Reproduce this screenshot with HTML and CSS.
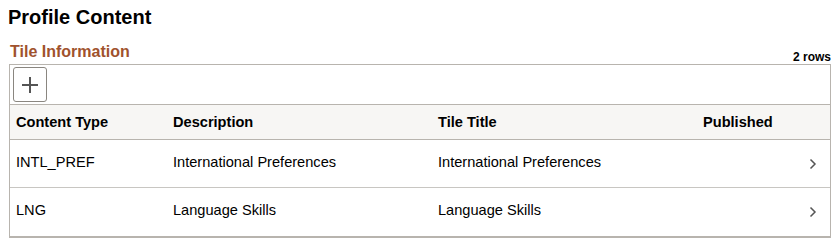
FILE: index.html
```html
<!DOCTYPE html>
<html>
<head>
<meta charset="utf-8">
<link rel="stylesheet" href="styles.css">
</head>
<body>
<h1 class="page-title">Profile Content</h1>
<div class="grid-head">
  <h2 class="grid-title">Tile Information</h2>
  <span class="row-count">2 rows</span>
</div>
<div class="grid">
  <div class="toolbar">
    <button class="add-btn" aria-label="Add">
      <svg width="20" height="20" viewBox="0 0 20 20"><path d="M10 2v16M2 10h16" stroke="#555" stroke-width="2" fill="none"/></svg>
    </button>
  </div>
  <table class="tbl">
    <colgroup>
      <col class="c1"><col class="c2"><col class="c3"><col class="c4"><col class="c5">
    </colgroup>
    <thead>
      <tr><th>Content Type</th><th>Description</th><th>Tile Title</th><th>Published</th><th></th></tr>
    </thead>
    <tbody>
      <tr><td>INTL_PREF</td><td>International Preferences</td><td>International Preferences</td><td></td><td class="chev"><svg width="8" height="12" viewBox="0 0 8 12"><path d="M1.5 1.5L6 6l-4.5 4.5" stroke="#555" stroke-width="1.5" fill="none"/></svg></td></tr>
      <tr><td>LNG</td><td>Language Skills</td><td>Language Skills</td><td></td><td class="chev"><svg width="8" height="12" viewBox="0 0 8 12"><path d="M1.5 1.5L6 6l-4.5 4.5" stroke="#555" stroke-width="1.5" fill="none"/></svg></td></tr>
    </tbody>
  </table>
</div>
</body>
</html>
```
FILE: styles.css
```css
body {
  margin: 0;
  padding: 0 8px 0 9px;
  font-family: "Liberation Sans", Arial, sans-serif;
  color: #000;
  background: #fff;
}
.page-title {
  margin: 0;
  padding-top: 5px;
  font-size: 20px;
  line-height: 24px;
  font-weight: bold;
  color: #000;
  margin-left: -1px;
}
.grid-head {
  display: flex;
  justify-content: space-between;
  align-items: flex-end;
  margin-top: 13px;
  height: 22px;
}
.grid-title {
  margin: 0;
  font-size: 16px;
  line-height: 20px;
  font-weight: bold;
  color: #a0522d;
  align-self: flex-start;
  padding-left: 1px;
}
.row-count {
  font-size: 12px;
  font-weight: bold;
  line-height: 14px;
}
.grid {
  border: 1px solid #b8b4ae;
  border-bottom: 2px solid #b8b4ae;
  width: 820px;
}
.toolbar {
  height: 39px;
  display: flex;
  align-items: center;
  padding-left: 3px;
  border-bottom: 1px solid #b8b4ae;
}
.add-btn {
  width: 34px;
  height: 35px;
  border: 1px solid #8a8680;
  border-radius: 3px;
  background: #fff;
  padding: 0;
  display: flex;
  align-items: center;
  justify-content: center;
}
.tbl {
  width: 100%;
  border-collapse: collapse;
  table-layout: fixed;
  font-size: 14.6px;
}
.c1 { width: 157px; }
.c2 { width: 265px; }
.c3 { width: 265px; }
.c4 { width: 100px; }
.c5 { width: 33px; }
.tbl th {
  background: #f7f6f4;
  text-align: left;
  font-weight: bold;
  height: 34px;
  padding: 0 0 0 6px;
  border-bottom: 1px solid #b8b4ae;
}
.tbl td {
  height: 48px;
  padding: 0 0 3px 6px;
  box-sizing: border-box;
  border-bottom: 1px solid #c8c6c2;
}
.tbl tbody tr:last-child td {
  border-bottom: none;
}
.tbl td.chev {
  padding: 0;
  vertical-align: middle;
}
.chev svg { display: block; margin-left: 12px; margin-top: 1px; }
```
